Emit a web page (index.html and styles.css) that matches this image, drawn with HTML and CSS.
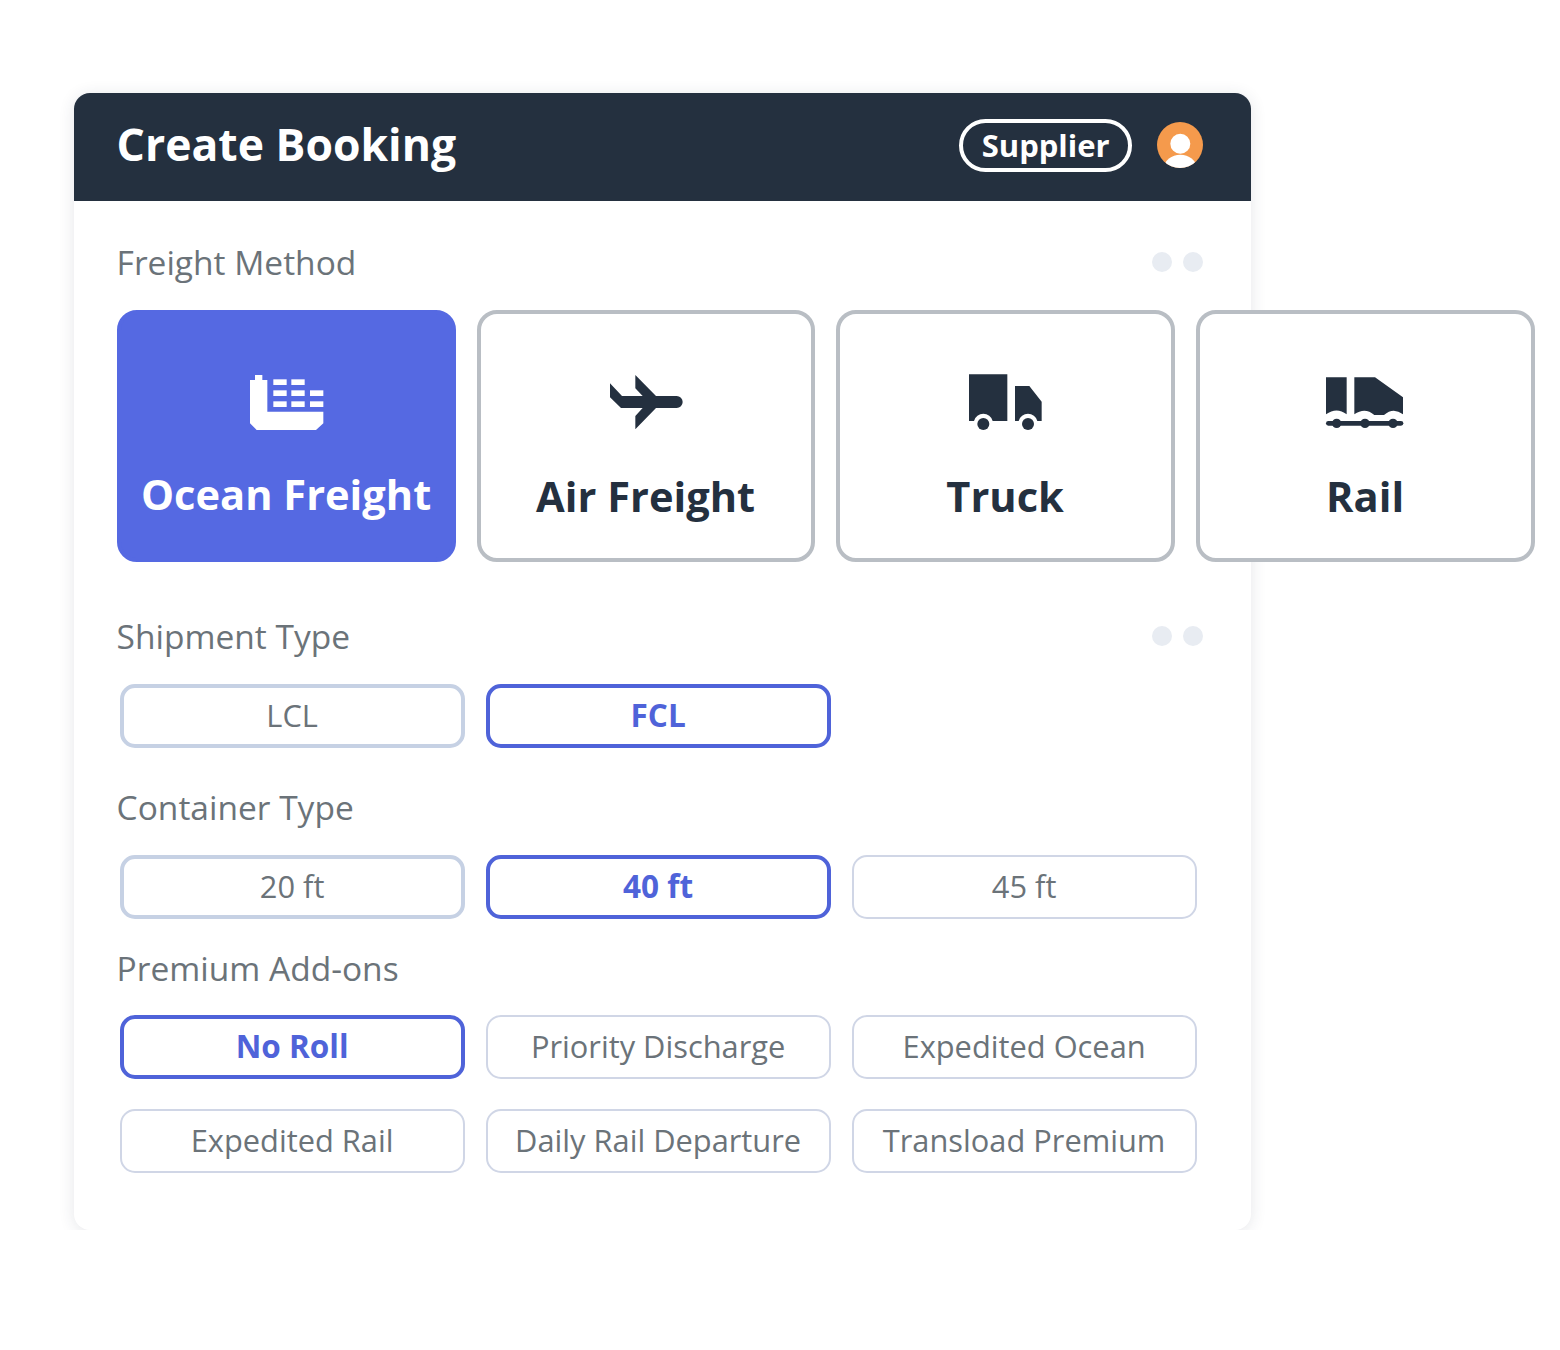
FILE: index.html
```html
<!DOCTYPE html>
<html lang="en">
<head>
<meta charset="UTF-8" />
<title>Create Booking</title>
<link rel="stylesheet" href="styles.css">
</head>
<body>
  <div class="card">
    <div class="card-header">
      <h1 class="card-title">Create Booking</h1>
      <div class="header-right">
        <span class="role-pill">Supplier</span>
        <svg class="avatar" viewBox="0 0 46 46" aria-hidden="true">
          <circle cx="23.3" cy="21.7" r="10" fill="#fff" />
          <ellipse cx="23.3" cy="45.7" rx="16" ry="13" fill="#fff" />
        </svg>
      </div>
    </div>

    <div class="card-body">
      <div class="section-head">
        <span class="section-label">Freight Method</span>
        <span class="dots"><i></i><i></i></span>
      </div>
      <div class="tiles">
        <button class="tile tile-active">
          <svg class="tile-icon" viewBox="0 0 330 240" aria-hidden="true">
            <path d="M60 60H75V45H97V60H112V155H280V190L258 210H80L60 190Z" />
            <rect x="130" y="58" width="40" height="17" />
            <rect x="184" y="58" width="40" height="17" />
            <rect x="130" y="91" width="40" height="17" />
            <rect x="184" y="91" width="40" height="17" />
            <rect x="240" y="91" width="40" height="17" />
            <rect x="130" y="124" width="40" height="17" />
            <rect x="184" y="124" width="40" height="17" />
            <rect x="240" y="124" width="40" height="17" />
          </svg>
          Ocean Freight
        </button>
        <button class="tile">
          <svg class="tile-icon" viewBox="0 0 330 240" aria-hidden="true">
            <path d="M57 70L93 108H155L133 85V45L195 108H257A18 18 0 0 1 257 144H195L133 208V168L155 144H90L57 112Z" />
          </svg>
          Air Freight
        </button>
        <button class="tile">
          <svg class="tile-icon" viewBox="0 0 330 240" aria-hidden="true">
            <path d="M57 43H172V183H128A29 29 0 0 0 72 183H57Z" />
            <circle cx="100" cy="192" r="18" />
            <path d="M195 78H238L275 125V183H262A29 29 0 0 0 206 183H195Z" />
            <circle cx="234" cy="192" r="18" />
          </svg>
          Truck
        </button>
        <button class="tile">
          <svg class="tile-icon" viewBox="0 0 330 240" aria-hidden="true">
            <path d="M48 52H110V163Q80 140 48 163Z" />
            <path d="M133 52H195L279 112V163Q250 140 222 165H193Q165 140 133 163Z" />
            <rect x="48" y="183" width="232" height="14" rx="7" />
            <circle cx="80" cy="190" r="14" />
            <circle cx="165" cy="190" r="14" />
            <circle cx="249" cy="190" r="14" />
          </svg>
          Rail
        </button>
      </div>

      <div class="section-head head-shipment">
        <span class="section-label">Shipment Type</span>
        <span class="dots"><i></i><i></i></span>
      </div>
      <div class="options">
        <button class="option option-mid">LCL</button>
        <button class="option option-on">FCL</button>
      </div>

      <div class="section-head head-container">
        <span class="section-label">Container Type</span>
      </div>
      <div class="options">
        <button class="option option-mid">20 ft</button>
        <button class="option option-on">40 ft</button>
        <button class="option">45 ft</button>
      </div>

      <div class="section-head head-addons">
        <span class="section-label">Premium Add-ons</span>
      </div>
      <div class="options">
        <button class="option option-on">No Roll</button>
        <button class="option">Priority Discharge</button>
        <button class="option">Expedited Ocean</button>
        <button class="option">Expedited Rail</button>
        <button class="option">Daily Rail Departure</button>
        <button class="option">Transload Premium</button>
      </div>
    </div>
  </div>
</body>
</html>
```

FILE: styles.css
```css
* {
  margin: 0;
  padding: 0;
  box-sizing: border-box;
}

body {
  background: #fff;
  padding: 93px 0 0 73.6px;
  font-family: "Open Sans", "Liberation Sans", sans-serif;
}

.card {
  width: 1177.6px;
  height: 1137px;
  background: #fff;
  border-radius: 16px;
  box-shadow: 0 2px 16px rgba(40, 50, 70, 0.12);
}

/* Dark top bar */
.card-header {
  height: 108px;
  padding: 0 48px 4px 43px;
  display: flex;
  justify-content: space-between;
  align-items: center;
  background: #24303f;
  border-radius: 16px 16px 0 0;
  color: #fff;
}

.card-title {
  font-size: 44.5px;
  font-weight: 700;
  padding-bottom: 4px;
}

.header-right {
  display: flex;
  align-items: center;
  gap: 25px;
}

.role-pill {
  width: 173px;
  height: 53px;
  display: flex;
  justify-content: center;
  align-items: center;
  border: 4px solid #fff;
  border-radius: 27px;
  font-size: 31px;
  font-weight: 700;
}

.avatar {
  width: 46px;
  height: 46px;
  border-radius: 50%;
  background: #f59a4c;
}

.card-body {
  padding: 0 48px 0 43px;
}

.section-head {
  display: flex;
  justify-content: space-between;
  align-items: center;
  height: 44px;
  margin-top: 39px;
}

.head-shipment { margin-top: 52px; }
.head-container { margin-top: 37px; }
.head-addons { margin-top: 27px; height: 43px; }

.section-label {
  font-size: 33.5px;
  color: #6b7379;
}

.dots {
  display: flex;
  gap: 11px;
}

.dots i {
  width: 20px;
  height: 20px;
  border-radius: 50%;
  background: #e8ecf2;
}

/* Freight method tiles, the row runs past the right edge of the card */
.tiles {
  display: grid;
  grid-template-columns: 339px 338px 339px 339px;
  column-gap: 21px;
  margin-top: 26px;
  width: 1417px;
}

.tile {
  height: 252px;
  display: flex;
  flex-direction: column;
  align-items: center;
  padding-top: 46px;
  background: #fff;
  border: 4px solid #b9bec4;
  border-radius: 20px;
  font-family: inherit;
  font-size: 41.6px;
  font-weight: 700;
  color: #24303f;
}

.tile-active {
  background: #5569e2;
  border-color: #5569e2;
  color: #fff;
}

.tile-icon {
  width: 110px;
  height: 80px;
  margin-bottom: 28px;
  fill: #24303f;
}

.tile-active .tile-icon {
  margin: 0 3px 26px 0;
  fill: #fff;
}

/* Small option buttons */
.options {
  display: grid;
  grid-template-columns: repeat(3, 345px);
  column-gap: 21px;
  row-gap: 30px;
  margin: 26px 0 0 3px;
}

.option {
  height: 64px;
  padding-bottom: 3px;
  background: #fff;
  border: 2px solid #d0d6e6;
  border-radius: 15px;
  font-family: inherit;
  font-size: 30.8px;
  color: #6b7379;
}

.option-mid {
  border: 4px solid #c6d1e4;
}

.option-on {
  border: 4px solid #4f63d9;
  font-size: 31.5px;
  font-weight: 700;
  color: #4f63d9;
}
```
